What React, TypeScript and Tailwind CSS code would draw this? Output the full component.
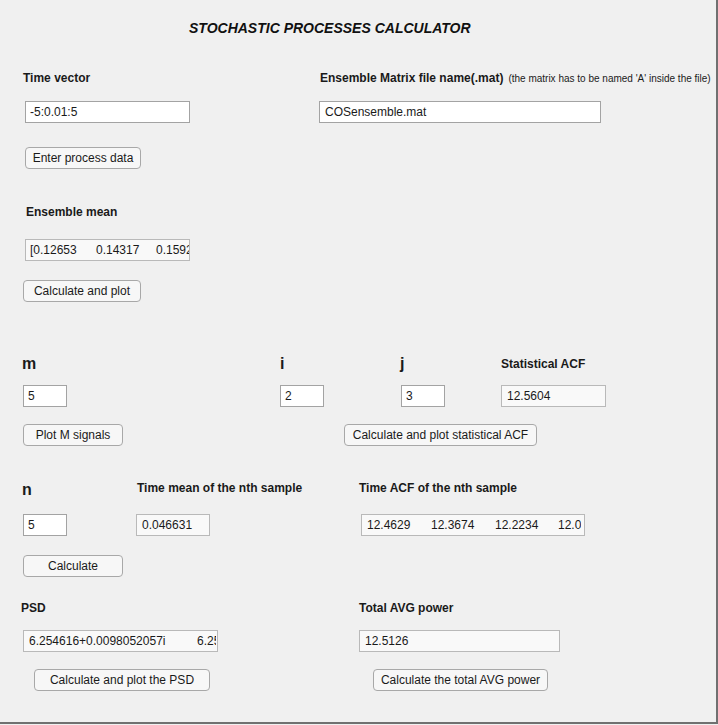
import React from "react";

const lbl = "text-[12px] leading-[14px] font-bold text-[#1a1a1a] whitespace-nowrap";
const big = "text-[16px] leading-[18px] font-bold text-[#1a1a1a]";
const edit =
  "h-[22px] shrink-0 border border-[#a3a3a3] bg-white flex items-center pl-[4px] text-[12px] text-[#1a1a1a] overflow-hidden whitespace-nowrap";
const disp =
  "h-[22px] shrink-0 border border-[#b9b9b9] bg-[#f9f9f9] flex items-center pl-[4px] text-[12px] text-[#1a1a1a] overflow-hidden whitespace-nowrap";
const btn =
  "h-[22px] shrink-0 rounded-[4px] border border-[#a8a8a8] bg-[#f7f7f7] flex items-center justify-center text-[12px] text-[#1a1a1a] whitespace-nowrap";

export default function App() {
  return (
    <div className="w-[718px] h-[725px] bg-[#f0f0f0] font-['Liberation_Sans',Arial,sans-serif]">
      <div className="w-[718px] h-[724px] box-border border-r-2 border-b-2 border-[#707070] flex flex-col">
        {/* Title */}
        <div className="mt-[20px] pl-[189px] text-[14px] leading-[16px] font-bold italic text-[#111]">
          STOCHASTIC PROCESSES CALCULATOR
        </div>

        {/* Row A labels */}
        <div className="mt-[35px] flex items-baseline h-[14px]">
          <div className={`${lbl} ml-[23px] w-[297px]`}>Time vector</div>
          <div className={lbl}>Ensemble Matrix file name(.mat)</div>
          <div className="ml-[5px] text-[10px] text-[#1a1a1a] whitespace-nowrap">
            (the matrix has to be named 'A' inside the file)
          </div>
        </div>

        {/* Row A inputs */}
        <div className="mt-[16px] flex">
          <div className={`${edit} ml-[25px] w-[165px]`}>-5:0.01:5</div>
          <div className={`${edit} ml-[129px] w-[282px] pl-[5px]`}>COSensemble.mat</div>
        </div>

        <div className="mt-[24px] flex">
          <button type="button" className={`${btn} ml-[25px] w-[116px]`}>
            Enter process data
          </button>
        </div>

        {/* Ensemble mean */}
        <div className={`${lbl} mt-[36px] ml-[26px]`}>Ensemble mean</div>
        <div className="mt-[20px] flex">
          <div className={`${disp} ml-[25px] w-[165px] pl-[2px]`}>
            <span className="w-[66px] shrink-0">[0.12653</span>
            <span className="w-[60px] shrink-0">0.14317</span>
            <span className="shrink-0">0.15923</span>
          </div>
        </div>
        <div className="mt-[19px] flex">
          <button type="button" className={`${btn} ml-[23px] w-[118px]`}>
            Calculate and plot
          </button>
        </div>

        {/* m i j row */}
        <div className="mt-[53px] flex h-[18px]">
          <div className={`${big} ml-[22px] w-[258px]`}>m</div>
          <div className={`${big} w-[120px]`}>i</div>
          <div className={`${big} w-[101px]`}>j</div>
          <div className={`${lbl} pt-[2px]`}>Statistical ACF</div>
        </div>
        <div className="mt-[12px] flex">
          <div className={`${edit} ml-[23px] w-[44px]`}>5</div>
          <div className={`${edit} ml-[213px] w-[44px]`}>2</div>
          <div className={`${edit} ml-[77px] w-[44px]`}>3</div>
          <div className={`${disp} ml-[56px] w-[105px] pl-[5px]`}>12.5604</div>
        </div>
        <div className="mt-[17px] flex">
          <button type="button" className={`${btn} ml-[23px] w-[100px]`}>
            Plot M signals
          </button>
          <button type="button" className={`${btn} ml-[221px] w-[193px]`}>
            Calculate and plot statistical ACF
          </button>
        </div>

        {/* n row */}
        <div className="mt-[35px] flex h-[18px]">
          <div className={`${big} ml-[22px] w-[115px]`}>n</div>
          <div className={`${lbl} w-[222px]`}>Time mean of the nth sample</div>
          <div className={lbl}>Time ACF of the nth sample</div>
        </div>
        <div className="mt-[15px] flex">
          <div className={`${edit} ml-[23px] w-[44px]`}>5</div>
          <div className={`${disp} ml-[69px] w-[74px] pl-[5px]`}>0.046631</div>
          <div className={`${disp} ml-[151px] w-[224px] pl-[5px] pr-[3px]`}>
            <div className="flex w-[214px] overflow-hidden">
              <span className="w-[64px] shrink-0">12.4629</span>
              <span className="w-[64px] shrink-0">12.3674</span>
              <span className="w-[63px] shrink-0">12.2234</span>
              <span className="shrink-0">12.0061</span>
            </div>
          </div>
        </div>
        <div className="mt-[19px] flex">
          <button type="button" className={`${btn} ml-[23px] w-[100px]`}>
            Calculate
          </button>
        </div>

        {/* PSD row */}
        <div className="mt-[24px] flex h-[14px]">
          <div className={`${lbl} ml-[21px] w-[338px]`}>PSD</div>
          <div className={lbl}>Total AVG power</div>
        </div>
        <div className="mt-[15px] flex">
          <div className={`${disp} ml-[23px] w-[195px] pl-[5px] pr-[1px]`}>
            <div className="flex w-[187px] overflow-hidden">
              <span className="w-[168px] shrink-0">6.254616+0.0098052057i</span>
              <span className="shrink-0">6.254616+0.0098052057i</span>
            </div>
          </div>
          <div className={`${disp} ml-[141px] w-[201px] pl-[5px]`}>12.5126</div>
        </div>
        <div className="mt-[17px] flex">
          <button
            type="button"
            className={`${btn} ml-[34px] w-[176px] border-[#4a97dc]`}
          >
            Calculate and plot the PSD
          </button>
          <button type="button" className={`${btn} ml-[163px] w-[175px]`}>
            Calculate the total AVG power
          </button>
        </div>
      </div>
    </div>
  );
}
